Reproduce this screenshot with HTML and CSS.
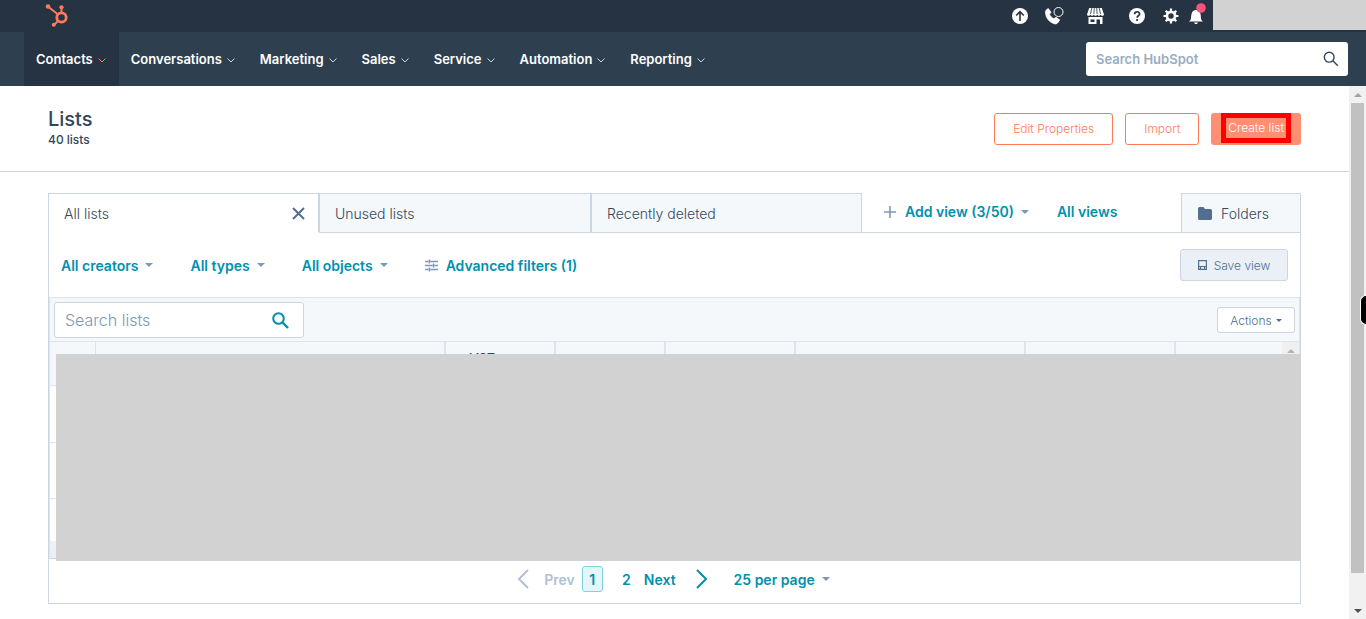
FILE: index.html
```html
<!DOCTYPE html>
<html lang="en">
<head>
<meta charset="utf-8">
<title>Lists</title>
<link rel="stylesheet" href="styles.css">
</head>
<body>
<header class="header">
  <div class="topbar">
    <a class="logo" href="#" aria-label="Home">
      <svg width="24" height="24" viewBox="0 0 24 24" fill="none" stroke="#ff7a59">
        <path d="M3.500 3 12.500 10M16.500 4v5M9.500 20.500l4-4" stroke-width="2"/>
        <circle cx="16.500" cy="13.500" r="4.700" stroke-width="2.800"/>
        <g fill="#ff7a59" stroke="none"><circle cx="3" cy="2.500" r="2.300"/><circle cx="16.500" cy="3.300" r="2.100"/><circle cx="8.800" cy="20.700" r="2"/></g>
      </svg>
    </a>
    <div class="tools">
      <button class="tool upgrade" aria-label="Upgrade"><svg width="16" height="16" viewBox="0 0 16 16"><circle cx="8" cy="8" r="8" fill="#fff"/><path d="M8 13V4M4.200 7.500 8 3.700l3.800 3.800" fill="none" stroke="#253342" stroke-width="1.600"/></svg></button>
      <button class="tool calls" aria-label="Calls"><svg width="19" height="18" viewBox="0 0 19 18"><path d="M1 3.200 3.300 1.500 6 5.300 4.500 7.200c.8 2 2.400 3.700 4.500 4.500l2-1.400 3.700 2.600-1.700 2.600c-1 1.800-3.500 1.800-6 .3C3.500 14 1 10.500 .6 6.500.5 5 .5 4 1 3.200Z" fill="#fff" stroke="#fff" stroke-width=".8"/><circle cx="13.500" cy="5" r="4.500" fill="#253342" stroke="#fff"/></svg></button>
      <button class="tool market" aria-label="Marketplace"><svg width="17" height="16" viewBox="0 0 17 16"><path d="M2.200 0h12.600L17 6.500c0 1.600-3 1.700-3.400 0-.4 1.700-3 1.700-3.400 0-.4 1.700-3 1.700-3.400 0-.4 1.700-3 1.700-3.400 0C3 8.200 0 8.100 0 6.500Z" fill="#fff"/><path d="M4.800 0 3.500 6M7.300 0 6.900 6M9.700 0l.4 6M12.200 0l1.300 6" stroke="#253342" stroke-width=".8"/><path d="M1.500 9h14v7H13v-4.500H9.500V16h-8Z" fill="#fff"/><path d="M3.500 11.500h4v2.500h-4Z" fill="#253342"/></svg></button>
      <button class="tool help" aria-label="Help"><svg width="16" height="16" viewBox="0 0 16 16"><circle cx="8" cy="8" r="8" fill="#fff"/><path d="M5.600 6.200C5.600 3 10.600 3 10.600 6 10.600 7.800 8.100 7.700 8.100 9.700" fill="none" stroke="#253342" stroke-width="1.700"/><circle cx="8.100" cy="12" r="1.100" fill="#253342"/></svg></button>
      <button class="tool settings" aria-label="Settings"><svg width="16" height="16" viewBox="0 0 16 16" fill="none" stroke="#fff"><circle cx="8" cy="8" r="4.100" stroke-width="2.800"/><path d="M8 .5v3M8 12.500v3M.5 8h3M12.500 8h3M2.700 2.700l2 2M11.300 11.300l2 2M2.700 13.300l2-2M11.300 4.700l2-2" stroke-width="2.200"/></svg></button>
      <button class="tool bell" aria-label="Notifications"><svg width="18" height="22" viewBox="0 0 18 22"><path d="M0 18.500c3-1.500 1.500-6 3-9C4 7.500 6 7 7 7s3 .5 4 2.500c1.500 3 0 7.500 3 9Z" fill="#fff"/><path d="M5 19.500h4l-1 1.500H6Z" fill="#fff"/><circle cx="12" cy="5" r="4.800" fill="#f2547d"/></svg></button>
      <div class="account"></div>
    </div>
  </div>
  <div class="navbar">
    <nav class="nav">
      <a class="nav-item active" href="#">Contacts<svg class="chev" viewBox="0 0 8 5"><path d="M.5.5 4 4 7.500.5"/></svg></a>
      <a class="nav-item" href="#">Conversations<svg class="chev" viewBox="0 0 8 5"><path d="M.5.5 4 4 7.500.5"/></svg></a>
      <a class="nav-item" href="#">Marketing<svg class="chev" viewBox="0 0 8 5"><path d="M.5.5 4 4 7.500.5"/></svg></a>
      <a class="nav-item" href="#">Sales<svg class="chev" viewBox="0 0 8 5"><path d="M.5.5 4 4 7.500.5"/></svg></a>
      <a class="nav-item" href="#">Service<svg class="chev" viewBox="0 0 8 5"><path d="M.5.5 4 4 7.500.5"/></svg></a>
      <a class="nav-item" href="#">Automation<svg class="chev" viewBox="0 0 8 5"><path d="M.5.5 4 4 7.500.5"/></svg></a>
      <a class="nav-item" href="#">Reporting<svg class="chev" viewBox="0 0 8 5"><path d="M.5.5 4 4 7.500.5"/></svg></a>
    </nav>
    <form class="global-search">
      <input type="search" placeholder="Search HubSpot" aria-label="Search HubSpot">
      <svg width="16" height="16" viewBox="0 0 16 16" fill="none" stroke="#33475b" stroke-width="1.400"><circle cx="6.200" cy="6.200" r="4.900"/><path d="m9.800 9.800 5 5"/></svg>
    </form>
  </div>
</header>

<div class="body">
  <main class="content">
    <div class="page-head">
      <div class="titles">
        <h1>Lists</h1>
        <p>40 lists</p>
      </div>
      <div class="actions">
        <button class="btn">Edit Properties</button>
        <button class="btn">Import</button>
        <button class="btn primary"><span class="highlight">Create list</span></button>
      </div>
    </div>

    <section class="card">
      <div class="tabs">
        <div class="tab current"><a href="#">All lists</a><button class="close" aria-label="Close view"><svg width="13" height="13" viewBox="0 0 13 13"><path d="m1 1 11 11M12 1 1 12" stroke="#516f90" stroke-width="2"/></svg></button></div>
        <div class="tab"><a href="#">Unused lists</a></div>
        <div class="tab"><a href="#">Recently deleted</a></div>
        <div class="views">
          <button class="link add-view"><svg width="12" height="12" viewBox="0 0 12 12"><path d="M6 0v12M0 6h12" stroke="#7c98b6" stroke-width="1.600"/></svg>Add view (3/50)<i class="caret"></i></button>
          <a class="link" href="#">All views</a>
        </div>
        <button class="folders"><svg width="14" height="13" viewBox="0 0 14 13"><path d="M0 1.500Q0 0 1.500 0h4L7 2h5.500Q14 2 14 3.500v8q0 1.500-1.500 1.500h-11Q0 13 0 11.500Z" fill="#516f90"/></svg>Folders</button>
      </div>

      <div class="filters">
        <button class="link">All creators<i class="caret"></i></button>
        <button class="link">All types<i class="caret"></i></button>
        <button class="link">All objects<i class="caret"></i></button>
        <button class="link advanced"><svg width="13" height="13" viewBox="0 0 13 13"><path d="M0 2.500h3.500M5.500 2.500H13M0 6.500h7.500M9.500 6.500H13M0 10.500h3.500M5.500 10.500H13M4.500.5v4M8.500 4.500v4M4.500 8.500v4" stroke="#7c98b6" stroke-width="1.500"/></svg>Advanced filters (1)</button>
        <button class="save"><svg width="9" height="10" viewBox="0 0 9 10"><path d="M.6.600h7.800v8.800H.6ZM.6 6.500h7.800M2.500 6.500v3M6.500 6.500v3" fill="none" stroke="#516f90" stroke-width="1.200"/></svg>Save view</button>
      </div>

      <div class="toolbar">
        <div class="list-search">
          <input type="search" placeholder="Search lists" aria-label="Search lists">
          <svg width="17" height="17" viewBox="0 0 17 17" fill="none" stroke="#0091ae" stroke-width="2"><circle cx="6.500" cy="6.500" r="5.300"/><path d="m10.500 10.500 5.500 5.500" stroke-width="2.400"/></svg>
        </div>
        <button class="more">Actions<i class="caret dark"></i></button>
      </div>

      <div class="table-region">
        <table class="lists">
          <colgroup><col class="c-check"><col class="c-name"><col class="c-std"><col class="c-std"><col class="c-mid"><col class="c-wide"><col class="c-date"><col></colgroup>
          <thead><tr><th></th><th></th><th>LIST</th><th></th><th></th><th></th><th></th><th class="last"><span class="scroll-up"><i></i></span></th></tr></thead>
          <tbody>
            <tr class="first"><td colspan="8"></td></tr>
            <tr><td colspan="8"></td></tr>
            <tr class="cut"><td colspan="8"></td></tr>
          </tbody>
        </table>
        <div class="hscroll"></div>
        <div class="redaction"></div>
      </div>

      <div class="pager">
        <button class="step prev" disabled><svg width="12" height="20" viewBox="0 0 12 20"><path d="m11 1-9 9 9 9"/></svg>Prev</button>
        <button class="page on">1</button>
        <button class="page">2</button>
        <button class="step next">Next<svg width="12" height="20" viewBox="0 0 12 20"><path d="m1 1 9 9-9 9"/></svg></button>
        <button class="link size">25 per page<i class="caret"></i></button>
      </div>
    </section>
  </main>
  <div class="scrollbar">
    <i class="arrow up"></i>
    <div class="thumb"></div>
    <i class="arrow down"></i>
    <div class="handle"></div>
  </div>
</div>
</body>
</html>
```
FILE: styles.css
```css
* { box-sizing: border-box; }

body {
  margin: 0;
  min-height: 100vh;
  display: flex;
  flex-direction: column;
  background: #fff;
  color: #33475b;
  font-family: Inter, "Noto Sans", sans-serif;
  font-size: 14px;
}

button, input { font: inherit; color: inherit; }
button { margin: 0; padding: 0; border: 0; background: none; }
a { color: inherit; text-decoration: none; }
svg { display: block; flex: none; }
input[type="search"] { appearance: none; min-width: 0; border: 0; padding: 0; background: none; outline: 0; }

/* Header */
.topbar {
  display: flex;
  justify-content: space-between;
  height: 32px;
  background: #253342;
}
.logo { padding: 4px 0 0 45px; }
.tools { display: flex; align-items: center; }
.tool { display: flex; }
.upgrade { margin-right: 17px; }
.calls { margin-right: 23px; }
.market { margin-right: 25px; }
.help { margin-right: 18px; }
.settings { margin-right: 10px; }
.bell { align-self: flex-start; padding-top: 3px; margin-right: 6px; }
.account { align-self: flex-start; width: 153px; height: 30px; background: #d2d2d2; }

.navbar {
  display: flex;
  justify-content: space-between;
  height: 54px;
  padding: 0 18px 0 24px;
  background: #2e3f50;
}
.nav { display: flex; }
.nav-item {
  display: flex;
  align-items: center;
  gap: 5px;
  padding: 0 13px 0 12px;
  color: #fff;
  font-size: 13px;
  font-weight: 600;
}
.nav-item.active { background: #253342; }
.chev { width: 8px; height: 5px; margin-top: 3px; fill: none; stroke: #cbd6e2; }
.active .chev { stroke: #ff7a59; }

.global-search {
  display: flex;
  align-items: center;
  width: 262px;
  height: 34px;
  margin-top: 10px;
  padding: 0 9px 0 10px;
  border-radius: 3px;
  background: #fff;
  font-size: 13px;
  font-weight: 600;
}
.global-search input { flex: 1; }
.global-search input::placeholder { color: #99acc2; }

/* Page */
.body { flex: 1; display: flex; }
.content { flex: 1; min-width: 0; }
.page-head {
  display: flex;
  justify-content: space-between;
  align-items: center;
  height: 86px;
  padding: 0 48px;
  border-bottom: 1px solid #cbd6e2;
}
.titles { padding-bottom: 2px; }
h1 { margin: 0; font-size: 20px; line-height: 24px; font-weight: 500; }
.titles p { margin: 0; font-size: 12px; line-height: 18px; font-weight: 500; }
.actions { display: flex; gap: 12px; }
.btn {
  height: 32px;
  padding: 0 18px;
  border: 1px solid #ff7a59;
  border-radius: 3px;
  color: #ff7a59;
  font-size: 12px;
  font-weight: 300;
}
.btn.primary {
  display: flex;
  align-items: flex-start;
  padding: 0 10px;
  border: 0;
  background: #ff8f73;
  color: #fff;
}
.highlight {
  display: block;
  padding: 0 2px;
  border: 5px solid #f00;
  line-height: 20px;
}

.card { margin: 21px 48px 15px; border: 1px solid #cbd6e2; border-top: 0; }

/* Tabs */
.tabs { display: flex; height: 40px; font-weight: 300; }
.tab {
  flex: 0 1 272px;
  display: flex;
  justify-content: space-between;
  align-items: center;
  padding: 0 15px;
  border: 1px solid #cbd6e2;
  border-left-width: 0;
  border-right-width: 2px;
  background: #f5f8fa;
}
.tab.current { flex-basis: 271px; border-bottom-color: #fff; background: #fff; }
.tab:nth-child(3) { flex-basis: 270px; border-right-width: 1px; }
.close { display: flex; margin-right: -2px; }
.views {
  flex: 1;
  display: flex;
  align-items: center;
  gap: 28px;
  padding: 0 22px 2px;
  border-bottom: 1px solid #cbd6e2;
}
.link {
  display: inline-flex;
  align-items: center;
  gap: 7px;
  color: #0091ae;
  font-size: 14px;
  font-weight: 600;
  white-space: nowrap;
}
.add-view svg { margin-right: 2px; }
.caret { border: 4px solid transparent; border-top-color: #7c98b6; border-bottom: 0; }
.caret.dark { border-width: 3px 3px 0; border-top-color: #516f90; }
.folders {
  display: flex;
  align-items: center;
  gap: 9px;
  width: 119px;
  padding-left: 16px;
  border: 1px solid #cbd6e2;
  border-right: 0;
  background: #f5f8fa;
  font-weight: 300;
}

/* Filters */
.filters { display: flex; align-items: center; gap: 37px; height: 64px; padding: 0 12px; }
.advanced { gap: 8px; }
.save {
  display: flex;
  align-items: center;
  justify-content: center;
  gap: 7px;
  width: 108px;
  height: 32px;
  margin-left: auto;
  border: 1px solid #cbd6e2;
  border-radius: 3px;
  background: #eaf0f6;
  color: #506e91;
  font-size: 12px;
  font-weight: 300;
}

.toolbar {
  display: flex;
  align-items: center;
  justify-content: space-between;
  height: 44px;
  padding: 1px 4px 0;
  border: solid #dfe3eb;
  border-width: 1px 1px 0;
  background: #f5f8fa;
}
.list-search {
  display: flex;
  align-items: center;
  width: 250px;
  height: 36px;
  padding: 0 14px 0 10px;
  border: 1px solid #cbd6e2;
  border-radius: 3px;
  background: #fff;
  font-size: 16px;
  font-weight: 300;
}
.list-search input { flex: 1; }
.list-search input::placeholder { color: #7c98b6; }
.more {
  display: flex;
  align-items: center;
  justify-content: center;
  gap: 4px;
  width: 78px;
  height: 26px;
  border: 1px solid #cbd6e2;
  border-radius: 3px;
  background: #fff;
  color: #506e91;
  font-size: 12px;
  font-weight: 300;
}

/* Table */
.table-region { position: relative; border: 1px solid #dfe3eb; border-bottom-color: #cbd6e2; }
.lists { width: 100%; table-layout: fixed; border-collapse: separate; border-spacing: 0; }
.c-check { width: 46px; }
.c-name { width: 350px; }
.c-std { width: 110px; }
.c-mid { width: 130px; }
.c-wide { width: 230px; }
.c-date { width: 150px; }
.lists th {
  height: 44px;
  padding: 6px 23px;
  border-right: 2px solid #dfe3eb;
  border-bottom: 1px solid #dfe3eb;
  background: #f5f8fa;
  font-size: 12px;
  line-height: 20px;
  font-weight: 600;
  text-align: left;
  vertical-align: top;
}
.lists th:first-child { border-right-width: 1px; }
.lists th.last { padding: 0; border-right: 0; }
.lists td { height: 56px; padding: 0; border-bottom: 1px solid #dfe3eb; }
.lists .first td { height: 57px; }
.lists .cut td { height: 42px; border: 0; }
.scroll-up {
  display: flex;
  justify-content: center;
  width: 17px;
  height: 17px;
  padding-top: 7px;
  margin-left: auto;
  background: #f0f0f0;
}
.scroll-up i { border: 4px solid transparent; border-top: 0; border-bottom-color: #b4b4b4; height: 4px; }
.hscroll { height: 17px; background: linear-gradient(#f1f1f1, #eaf0f6 60%); }
.redaction { position: absolute; top: 12px; right: -2px; bottom: -3px; left: 6px; background: #d2d2d2; }

/* Pager */
.pager {
  display: flex;
  align-items: center;
  justify-content: center;
  height: 44px;
  padding: 0 2px 4px 0;
  color: #0091ae;
  font-weight: 600;
}
.step { display: flex; align-items: center; }
.step svg { fill: none; stroke: currentColor; stroke-width: 2; }
.prev { gap: 15px; margin-right: 7px; color: #b0c1d4; }
.next { gap: 20px; margin-right: 26px; }
.page { width: 21px; height: 26px; border: 1px solid transparent; border-radius: 3px; }
.page.on { margin-right: 13px; border-color: #7fd1de; background: #e5f5f8; }
.page:not(.on) { margin-right: 7px; }

/* Scrollbar */
.scrollbar {
  position: relative;
  display: flex;
  flex-direction: column;
  align-items: center;
  width: 17px;
  padding: 7px 0 6px;
  background: #f1f1f1;
}
.thumb { width: 13px; flex: 1; margin: 6px 0 36px; background: #c1c1c1; }
.arrow { border: 4px solid transparent; }
.up { border-top: 0; border-bottom-color: #a3a3a3; }
.down { border-bottom: 0; border-top-color: #505050; }
.handle {
  position: absolute;
  top: 209px;
  right: 0;
  width: 6px;
  height: 30px;
  border: 1px solid #fff;
  border-right: 0;
  border-radius: 7px 0 0 7px;
  background: #000;
}
```
